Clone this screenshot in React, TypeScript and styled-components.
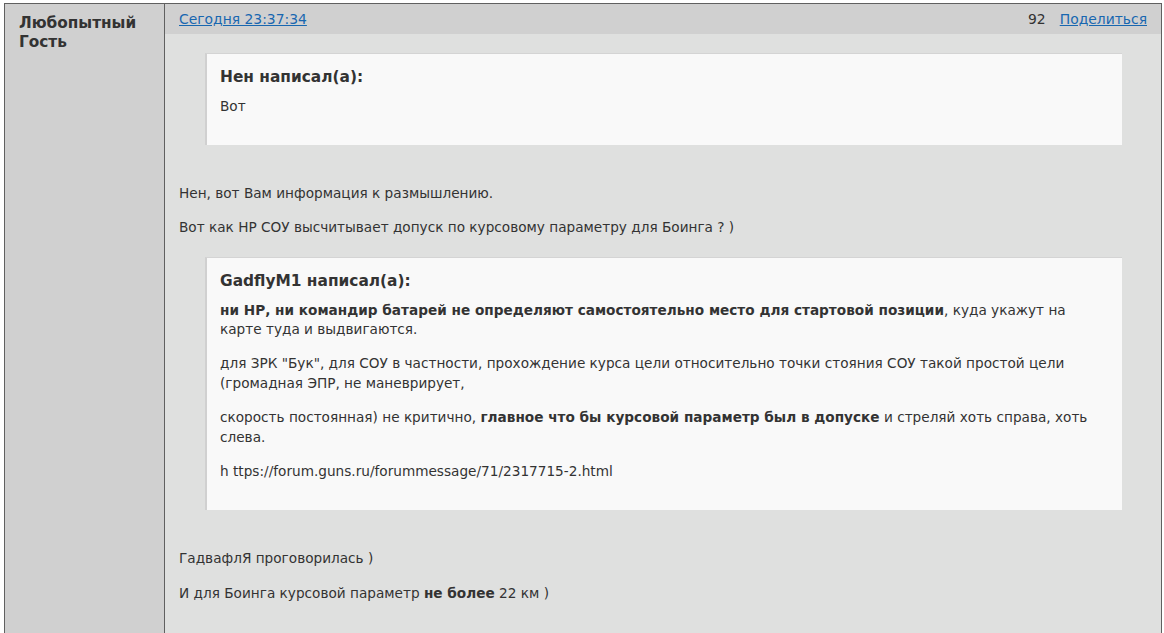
import React from "react";
import styled, { createGlobalStyle } from "styled-components";

const Global = createGlobalStyle`
  html, body { margin: 0; padding: 0; background: #ffffff; }
  body { font-family: "DejaVu Sans", Verdana, sans-serif; color: #333333; }
  #root { padding: 3px 0 0 4px; }
`;

const Post = styled.div`
  display: grid;
  grid-template-columns: 160px 1fr;
  width: 1158px;
  height: 640px;
  border: 1px solid #606060;
  border-bottom: none;
  box-sizing: border-box;
`;

const Author = styled.div`
  background: #d0d0d0;
  border-right: 1px solid #606060;
  padding: 10px 14px;
  font-size: 15.3px;
  font-weight: bold;
  line-height: 19px;
  color: #333333;
`;

const Main = styled.div`
  background: #dfe0df;
  display: flex;
  flex-direction: column;
`;

const Header = styled.div`
  background: #d0d0d0;
  height: 30px;
  display: flex;
  align-items: center;
  justify-content: space-between;
  padding: 0 14px;
  font-size: 13.9px;
`;

const Link = styled.a`
  color: #1867b0;
  text-decoration: underline;
  cursor: pointer;
`;

const Right = styled.div`
  display: flex;
  gap: 14px;
  align-items: center;
  color: #333333;
`;

const Body = styled.div`
  padding: 19px 14px 0 14px;
  font-size: 13.65px;
  line-height: 19.6px;
`;

const Quote = styled.div`
  margin: 0 25px 0 26px;
  background: #f9f9f9;
  border-left: 2px solid #d0d0d0;
  border-top: 1px solid #d4d4d4;
  padding: 12px 14px 14px 13px;
`;

const QuoteTitle = styled.div`
  font-size: 15.4px;
  font-weight: bold;
  line-height: 22px;
  margin-bottom: 9px;
`;

const P = styled.p<{ $gap?: number }>`
  margin: 0 0 ${(p) => (p.$gap ?? 14.5)}px 0;
`;

const Spacer = styled.div<{ $h: number }>`
  height: ${(p) => p.$h}px;
`;

export default function App() {
  return (
    <>
      <Global />
      <Post>
        <Author>
          Любопытный
          <br />
          Гость
        </Author>
        <Main>
          <Header>
            <Link>Сегодня 23:37:34</Link>
            <Right>
              <span>92</span>
              <Link>Поделиться</Link>
            </Right>
          </Header>
          <Body>
            <Quote>
              <QuoteTitle>Нен написал(а):</QuoteTitle>
              <P $gap={14}>Вот</P>
            </Quote>
            <Spacer $h={39} />
            <P $gap={15}>Нен, вот Вам информация к размышлению.</P>
            <P $gap={19}>Вот как НР СОУ высчитывает допуск по курсовому параметру для Боинга ? )</P>
            <Quote>
              <QuoteTitle>GadflyM1 написал(а):</QuoteTitle>
              <P>
                <b>ни НР, ни командир батарей не определяют самостоятельно место для стартовой позиции</b>, куда укажут на карте туда и выдвигаются.
              </P>
              <P>
                для ЗРК "Бук", для СОУ в частности, прохождение курса цели относительно точки стояния СОУ такой простой цели (громадная ЭПР, не маневрирует,
              </P>
              <P>
                скорость постоянная) не критично, <b>главное что бы курсовой параметр был в допуске</b> и стреляй хоть справа, хоть слева.
              </P>
              <P $gap={15}>h ttps://forum.guns.ru/forummessage/71/2317715-2.html</P>
            </Quote>
            <Spacer $h={39} />
            <P $gap={15}>ГадвафлЯ проговорилась )</P>
            <P>
              И для Боинга курсовой параметр <b>не более</b> 22 км )
            </P>
          </Body>
        </Main>
      </Post>
    </>
  );
}
